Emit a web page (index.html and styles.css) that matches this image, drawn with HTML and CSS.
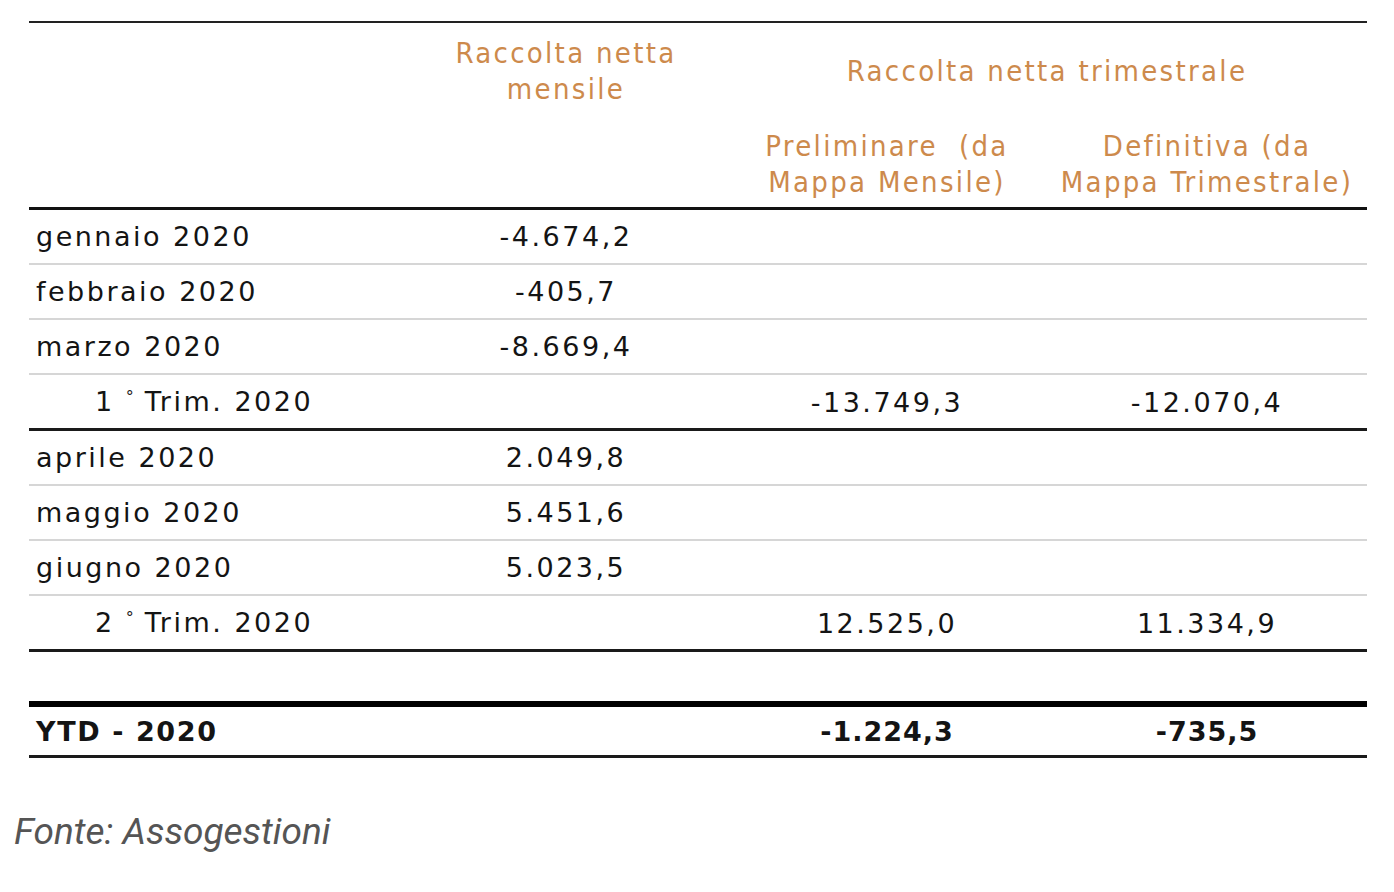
FILE: index.html
```html
<!DOCTYPE html>
<html lang="it">
<head>
<meta charset="utf-8">
<title>Raccolta netta 2020</title>
<link rel="stylesheet" href="styles.css">
</head>
<body>
<div class="page">
  <table class="data">
    <colgroup>
      <col class="c-label">
      <col class="c-month">
      <col class="c-pre">
      <col class="c-def">
    </colgroup>
    <thead>
      <tr class="h1">
        <th rowspan="2" class="blank"></th>
        <th rowspan="2" class="top">Raccolta netta<br>mensile</th>
        <th colspan="2">Raccolta netta trimestrale</th>
      </tr>
      <tr class="h2">
        <th>Preliminare&nbsp; (da<br>Mappa Mensile)</th>
        <th>Definitiva (da<br>Mappa Trimestrale)</th>
      </tr>
    </thead>
    <tbody>
      <tr class="row"><td class="lab">gennaio 2020</td><td>-4.674,2</td><td></td><td></td></tr>
      <tr class="row"><td class="lab">febbraio 2020</td><td>-405,7</td><td></td><td></td></tr>
      <tr class="row"><td class="lab">marzo 2020</td><td>-8.669,4</td><td></td><td></td></tr>
      <tr class="row trim"><td class="lab ind">1 <span class="deg">°</span> Trim. 2020</td><td></td><td>-13.749,3</td><td>-12.070,4</td></tr>
      <tr class="row"><td class="lab">aprile 2020</td><td>2.049,8</td><td></td><td></td></tr>
      <tr class="row"><td class="lab">maggio 2020</td><td>5.451,6</td><td></td><td></td></tr>
      <tr class="row"><td class="lab">giugno 2020</td><td>5.023,5</td><td></td><td></td></tr>
      <tr class="row trim"><td class="lab ind">2 <span class="deg">°</span> Trim. 2020</td><td></td><td>12.525,0</td><td>11.334,9</td></tr>
      <tr class="gap"><td></td><td></td><td></td><td></td></tr>
      <tr class="row ytd"><td class="lab">YTD - 2020</td><td></td><td>-1.224,3</td><td>-735,5</td></tr>
    </tbody>
  </table>
  <p class="source">Fonte: Assogestioni</p>
</div>
</body>
</html>
```
FILE: styles.css
```css
html, body {
  margin: 0;
  padding: 0;
  background: #ffffff;
}

.page {
  padding: 21px 27px 0 29px;
}

.data {
  width: 1338px;
  border-collapse: collapse;
  table-layout: fixed;
  font-family: "DejaVu Sans", Verdana, sans-serif;
  color: #141414;
}

.c-label { width: 376px; }
.c-month { width: 322px; }
.c-pre { width: 320px; }
.c-def { width: 320px; }

.data thead tr.h1 {
  border-top: 2px solid #222222;
}

.data th {
  font-family: "DejaVu Sans Condensed", "DejaVu Sans", sans-serif;
  font-weight: normal;
  color: #cd8a4c;
  font-size: 29px;
  line-height: 36px;
  letter-spacing: 2.3px;
  text-align: center;
  padding: 0;
}

.data tr.h1 th {
  height: 95px;
  vertical-align: middle;
}

.data tr.h1 th.top {
  vertical-align: top;
  padding-top: 12px;
}

.data tr.h2 th {
  height: 87px;
  vertical-align: middle;
  padding-top: 2px;
}

.data thead tr.h2 {
  border-bottom: 3px solid #111111;
}

.data td {
  font-size: 27px;
  letter-spacing: 2.5px;
  text-align: center;
  padding: 0;
  height: 53px;
  vertical-align: middle;
}

.data td.lab {
  text-align: left;
  padding-left: 7px;
}

.data tr.trim td {
  height: 49px;
  padding-top: 2px;
}

.data td.ind {
  padding-left: 66px;
  padding-top: 0;
  padding-bottom: 2px;
}

.deg {
  font-size: 16px;
  vertical-align: 9px;
  letter-spacing: 0;
}

.data tr.row {
  border-bottom: 2px solid #d6d6d6;
}

.data tr.trim {
  border-bottom: 3px solid #1a1a1a;
}

.data tr.gap td {
  height: 49px;
}

.data tr.gap {
  border-bottom: 6px solid #000000;
}

.data tr.ytd {
  border-bottom: 3px solid #1a1a1a;
}

.data tr.ytd td {
  font-weight: bold;
  height: 48px;
  letter-spacing: 1px;
}

.data tr.ytd td.lab {
  letter-spacing: 1.6px;
}

.source {
  margin: 52px 0 0 -15px;
  font-family: Roboto, "Liberation Sans", sans-serif;
  font-style: italic;
  font-size: 37px;
  color: #555555;
}
```
